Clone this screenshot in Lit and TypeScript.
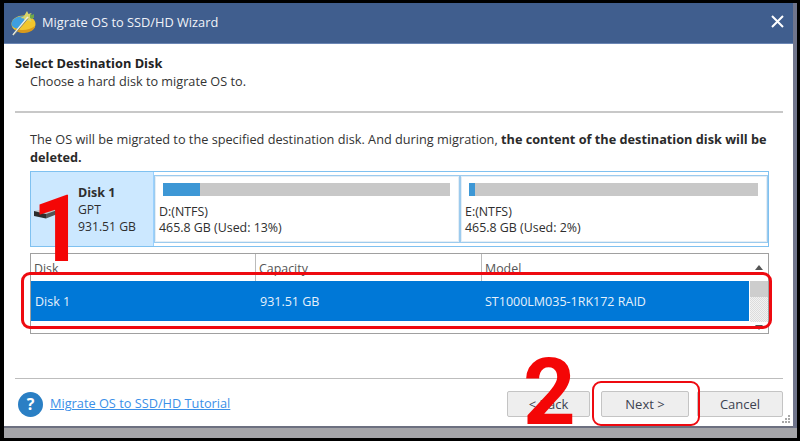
import { LitElement, html, css, svg } from "lit";
import { customElement } from "lit/decorators.js";

const appIcon = svg`<svg class="appicon" width="26" height="26" viewBox="0 0 26 26">
  <ellipse cx="12.500" cy="14" rx="12" ry="8.500" fill="#f2c62c"/>
  <path d="M.5 14C.5 9 6 6 13 6c2 0 3 .3 4 1L8 19c-4-.5-7.500-2-7.500-5z" fill="#3f9fe0"/>
  <path d="M4 18c4 3 14 3 20-2 0 4-6 7-11 7S4 21 4 18z" fill="#d99a1c"/>
  <path d="M16 1l1.500 3 3-1-1 3 3.500 1.500-3.500 1.500 1 3-3.500-1.500L14 12l-1-3.500L9.500 8 13 6z" fill="#d8d468"/>
  <path d="M19 4l2 1 2-1v3l-2 2-2-1z" fill="#6fa84a"/>
  <path d="M2 25L17 7" stroke="#eef0e4" stroke-width="1.800"/>
  <path d="M2.500 25.500L17 8.500" stroke="#6b6b5a" stroke-width=".7"/>
</svg>`;

const diskIcon = svg`<svg class="diskicon" width="28" height="18" viewBox="0 0 28 18">
  <path d="M1 6L26 1l1 3-14 5z" fill="#c6c6c6"/>
  <path d="M1 6l12 3v4.500L1 11z" fill="#2d2d2d"/>
  <path d="M13 9l14-5v4L13 13.500z" fill="#555"/>
</svg>`;

const helpIcon = svg`<svg width="25" height="25" viewBox="0 0 25 25" class="help">
  <circle cx="12.500" cy="12.500" r="12.500" fill="#2a7fc4"/>
  <text x="12.500" y="18" text-anchor="middle" class="helpq">?</text>
</svg>`;

const partitions = [
  { name: "D:(NTFS)", size: "465.8 GB (Used: 13%)", used: 13 },
  { name: "E:(NTFS)", size: "465.8 GB (Used: 2%)", used: 2 },
];

@customElement("app-root")
export class AppRoot extends LitElement {
  static styles = css`
    :host {
      display: block;
      position: relative;
      width: 800px;
      height: 441px;
      overflow: hidden;
      background: #000;
      box-sizing: border-box;
      padding: 3px 0 3px 4px;
      font-family: "Open Sans", "Noto Sans", sans-serif;
      font-size: 12.500px;
      color: #2e2e2e;
    }
    .window {
      width: 793px;
      height: 435px;
      box-sizing: border-box;
      display: flex;
      flex-direction: column;
      background: #a4a4a8;
    }
    .frame {
      width: 789px;
      height: 425px;
      box-sizing: border-box;
      display: flex;
      flex-direction: column;
      background: #fff;
      border-bottom: 2px solid #6c7080;
    }
    .side { display: flex; flex: none; }
    .rightbar { width: 4px; background: #70758c; }
    .titlebar {
      height: 41px;
      flex: none;
      box-sizing: border-box;
      background: #405e8e;
      border-bottom: 1px solid #6b86b4;
      display: flex;
      align-items: center;
      padding: 0 9px 2px 7px;
      color: #f0f3f8;
      font-size: 12.800px;
    }
    .appicon { margin-right: 5px; flex: none; margin-top: 2px; }
    .titlebar .t { flex: 1; }
    .close { display: block; margin-top: -1px; }
    .body {
      flex: 1;
      display: flex;
      flex-direction: column;
      padding: 0 10px 0 11px;
      position: relative;
    }
    .h1 { font-weight: 700; margin-top: 10px; line-height: 18px; font-size: 12.800px; color: #222; }
    .h2 { padding-left: 15px; line-height: 18px; font-size: 12.700px; color: #333; }
    .rule { height: 2px; background: #c8c8c8; flex: none; }
    .rule.a { margin-top: 21px; }
    .desc { padding: 0 0 0 15px; margin-top: 17px; line-height: 18px; font-size: 12.720px; width: 755px; box-sizing: border-box; color: #333; }
    .desc b { font-weight: 700; color: #2a2a2a; }
    .panel {
      margin: 5px 0 0 15px;
      width: 739px;
      height: 76px;
      box-sizing: border-box;
      border: 1px solid #7fc1f0;
      display: flex;
    }
    .disk {
      width: 123px;
      background: #cce8ff;
      flex: none;
      display: flex;
      box-sizing: border-box;
      padding-left: 2px;
      position: relative;
      border-right: 1px solid #99d1ff;
    }
    .diskicon { margin-top: 33px; flex: none; }
    .disk .info { padding: 12px 0 0 17px; line-height: 17px; font-size: 12.200px; }
    .disk .info b { font-weight: 700; display: block; font-size: 12.500px; }
    .parts { flex: 1; display: flex; padding: 3px 0 3px 0; gap: 0; }
    .part {
      flex: 1;
      box-sizing: border-box;
      border: 1px solid #9ccbee;
      border-width: 1px 1px 2px 1px;
      padding: 7px 9px 0 4px;
      line-height: 16px;
      font-size: 12.400px;
      outline: 1px solid #e4eef6;
      outline-offset: -2px;
    }
    .part:first-child { flex: none; width: 306px; }
    .part .bar { height: 13px; background: #c8c8c8; margin: 0 0 8px 4px; }
    .part .fill { height: 100%; background: #3d97d5; }
    .table {
      margin: 6px 0 0 15px;
      width: 739px;
      height: 81px;
      box-sizing: border-box;
      border: 1px solid #a0a0a0;
      display: flex;
    }
    .grid { flex: 1; display: flex; flex-direction: column; }
    .thead { height: 27px; display: grid; grid-template-columns: 225px 226px 1fr; flex: none; box-sizing: border-box; }
    .thead div { padding: 6px 0 0 3px; border-right: 1px solid #bbb; line-height: 17px; font-size: 12.400px; color: #555; }
    .thead div:last-child { border-right: none; }
    .tr {
      height: 40px;
      background: #0078d7;
      color: #e6f1fb;
      display: grid;
      grid-template-columns: 225px 225px 1fr;
      align-items: center;
      font-size: 12.500px;
    }
    .tr div { padding: 0 0 0 4px; }
    .scroll { width: 18px; flex: none; display: flex; flex-direction: column; background: #f0f0f0; margin-left: 1px; }
    .sbtn { height: 27px; display: flex; align-items: center; justify-content: center; background: #fff; flex: none; }
    .sbtn.down { height: 11px; background: #fff; }
    .thumb { height: 16px; background: #cdcdcd; flex: none; }
    .track { flex: 1; background: repeating-conic-gradient(#dcdcdc 0 25%, #f2f2f2 0 50%) 0 0 / 2px 2px; }
    .footer {
      margin-top: auto;
      display: flex;
      flex-direction: column;
      flex: none;
    }
    .rule.b { margin-bottom: 0; height: 1px; background: #bdbdbd; }
    .factions { height: 47px; display: flex; align-items: center; padding: 3px 0 0 3px; box-sizing: border-box; }
    .help { flex: none; margin: 1px 7px 0 0; }
    .helpq { font: 700 16px "Open Sans", sans-serif; fill: #fff; }
    .link { color: #3a8fe8; text-decoration: underline; font-size: 12.750px; flex: 1; padding-bottom: 2px; }
    .btn {
      height: 26px;
      box-sizing: border-box;
      border: 1px solid #c4c4c4;
      border-radius: 2px;
      background: #eeeeee;
      display: flex;
      align-items: center;
      justify-content: center;
      font-size: 13px;
      color: #3c4250;
      padding-bottom: 1px;
      flex: none;
    }
    .btn.back { width: 83px; margin-right: 11px; }
    .btn.next { width: 88px; margin-right: 8px; }
    .btn.cancel { width: 86px; margin-right: 0; }
    .grip { position: absolute; right: 3px; bottom: 2px; display: block; }
    .mark {
      position: absolute;
      color: #f40606;
      font: 700 92px/92px Roboto, "Liberation Sans", sans-serif;
      pointer-events: none;
    }
    .mark.one { left: 32px; top: 184px; }
    .mark.two { left: 523px; top: 347px; }
    .ring {
      position: absolute;
      box-sizing: border-box;
      border: 3px solid #ee0a10;
      border-radius: 9px;
      pointer-events: none;
    }
    .ring.row { left: 21px; top: 272px; width: 751px; height: 57px; }
    .ring.nxt { left: 592px; top: 381px; width: 108px; height: 45px; border-width: 2.500px; }
  `;

  render() {
    return html`
      <div class="window">
        <div class="side">
          <div class="frame">
            <div class="titlebar">
              ${appIcon}
              <span class="t">Migrate OS to SSD/HD Wizard</span>
              <svg class="close" width="13" height="13" viewBox="0 0 13 13"><path d="M1 1l11 11M12 1L1 12" stroke="#fff" stroke-width="2"/></svg>
            </div>
            <div class="body">
              <div class="h1">Select Destination Disk</div>
              <div class="h2">Choose a hard disk to migrate OS to.</div>
              <div class="rule a"></div>
              <div class="desc">The OS will be migrated to the specified destination disk. And during migration, <b>the content of the destination disk will be deleted.</b></div>
              <div class="panel">
                <div class="disk">
                  ${diskIcon}
                  <div class="info"><b>Disk 1</b>GPT<br />931.51 GB</div>
                </div>
                <div class="parts">
                  ${partitions.map(
                    (p) => html`<div class="part">
                      <div class="bar"><div class="fill" style="width:${p.used}%"></div></div>
                      ${p.name}<br />${p.size}
                    </div>`
                  )}
                </div>
              </div>
              <div class="table">
                <div class="grid">
                  <div class="thead"><div>Disk</div><div>Capacity</div><div>Model</div></div>
                  <div class="tr"><div>Disk 1</div><div>931.51 GB</div><div>ST1000LM035-1RK172 RAID</div></div>
                </div>
                <div class="scroll">
                  <div class="sbtn"><svg width="8" height="5" viewBox="0 0 8 5"><path d="M4 0l4 5H0z" fill="#555"/></svg></div>
                  <div class="thumb"></div>
                  <div class="track"></div>
                  <div class="sbtn down"><svg width="8" height="5" viewBox="0 0 8 5"><path d="M0 0h8L4 5z" fill="#555"/></svg></div>
                </div>
              </div>
              <div class="footer">
                <div class="rule b"></div>
                <div class="factions">
                  ${helpIcon}
                  <span class="link">Migrate OS to SSD/HD Tutorial</span>
                  <div class="btn back">&lt; Back</div>
                  <div class="btn next">Next &gt;</div>
                  <div class="btn cancel">Cancel</div>
                </div>
              </div>
              <svg class="grip" width="9" height="9" viewBox="0 0 9 9"><path d="M7 0h2v2H7zM4 3h2v2H4zM7 3h2v2H7zM1 6h2v2H1zM4 6h2v2H4zM7 6h2v2H7z" fill="#a8a8a8"/></svg>
            </div>
          </div>
          <div class="rightbar"></div>
        </div>
      </div>
      <div class="ring row"></div>
      <div class="ring nxt"></div>
      <div class="mark one">1</div>
      <div class="mark two">2</div>
    `;
  }
}
